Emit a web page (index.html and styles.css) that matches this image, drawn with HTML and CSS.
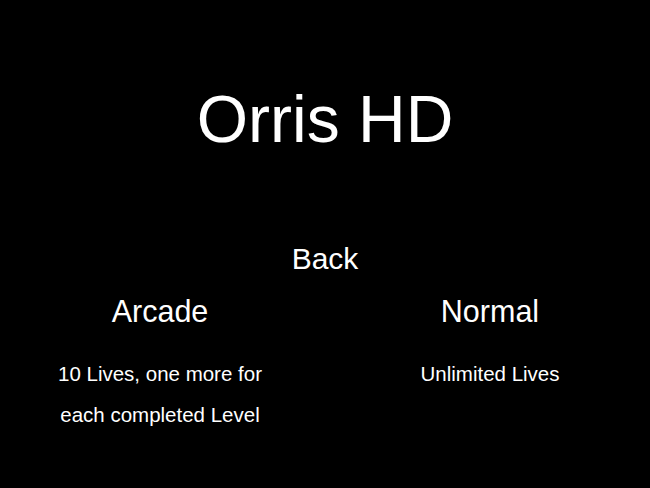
FILE: index.html
```html
<!DOCTYPE html>
<html lang="en">
<head>
<meta charset="utf-8">
<title>Orris HD</title>
<link rel="stylesheet" href="styles.css">
</head>
<body>
<main class="screen">
  <h1 class="title">Orris HD</h1>
  <div class="back">Back</div>
  <div class="modes">
    <section class="mode">
      <h2 class="mode-name">Arcade</h2>
      <p class="mode-desc">10 Lives, one more for<br>each completed Level</p>
    </section>
    <section class="mode">
      <h2 class="mode-name">Normal</h2>
      <p class="mode-desc">Unlimited Lives</p>
    </section>
  </div>
</main>
</body>
</html>
```

FILE: styles.css
```css
html, body {
  margin: 0;
  padding: 0;
  background: #000;
}

body {
  width: 650px;
  height: 488px;
  overflow: hidden;
  color: #fff;
  font-family: "Liberation Sans", Arial, sans-serif;
}

.screen {
  display: flex;
  flex-direction: column;
  align-items: center;
  padding-top: 86px;
}

.title {
  margin: 0;
  font-size: 66px;
  line-height: 66px;
  font-weight: normal;
}

.back {
  margin-top: 92px;
  font-size: 30px;
  line-height: 30px;
}

.modes {
  align-self: stretch;
  display: grid;
  grid-template-columns: 300px 300px;
  column-gap: 30px;
  padding: 0 10px;
  margin-top: 22px;
}

.mode {
  display: flex;
  flex-direction: column;
  align-items: center;
  text-align: center;
}

.mode-name {
  margin: 0;
  font-size: 30.5px;
  line-height: 30px;
  font-weight: normal;
}

.mode-desc {
  margin: 27px 0 0;
  font-size: 20.5px;
  line-height: 41px;
}
```
